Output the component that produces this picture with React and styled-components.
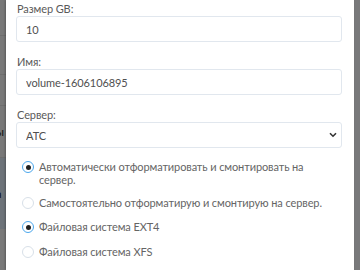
import React from "react";
import styled, { createGlobalStyle } from "styled-components";

const Global = createGlobalStyle`
  html, body { margin: 0; padding: 0; }
  body { width: 360px; height: 270px; overflow: hidden; font-family: Lato, "Noto Sans", "Liberation Sans", sans-serif; }
  #root { height: 270px; }
`;

const Screen = styled.div`
  position: relative;
  width: 360px;
  height: 270px;
  overflow: hidden;
  background: #f2f3f5;
`;

const PageBehind = styled.div`
  display: flex;
  flex-direction: column;
  width: 14px;
  height: 100%;
`;

const BehindRow = styled.div`
  height: ${(p) => p.$h}px;
  background: ${(p) => p.$bg};
  border-bottom: 1px solid ${(p) => p.$line || "transparent"};
  font-size: 11px;
  color: #222;
  line-height: ${(p) => p.$h}px;
  white-space: nowrap;
  overflow: hidden;
  text-indent: -4px;
`;

const Backdrop = styled.div`
  position: absolute;
  inset: 0;
  background: rgba(0, 0, 0, 0.5);
  display: flex;
  justify-content: center;
  align-items: flex-start;
`;

const Modal = styled.div`
  width: 348px;
  height: 270px;
  background: #ffffff;
  box-sizing: border-box;
  padding: 3px 12px 0 10px;
  box-shadow: -1px 0 2px rgba(0, 0, 0, 0.25);
`;

const Field = styled.div`
  display: flex;
  flex-direction: column;
  margin-bottom: ${(p) => (p.$last ? 0 : 14)}px;
`;

const Label = styled.label`
  display: block;
  font-size: 11px;
  letter-spacing: -0.1px;
  line-height: 12px;
  height: 12px;
  color: #5a5a5a;
  padding-left: 1px;
  margin-bottom: 1px;
  white-space: nowrap;
`;

const Input = styled.input`
  box-sizing: border-box;
  display: block;
  height: 26px;
  width: 100%;
  margin: 0;
  border: 1px solid #e1e7ee;
  border-radius: 3px;
  padding: 0 9px;
  font-family: inherit;
  font-size: 11px;
  letter-spacing: -0.1px;
  color: #505050;
  background: #fff;
  outline: none;
`;

const SelectWrap = styled.div`
  position: relative;
`;

const Select = styled.select`
  box-sizing: border-box;
  display: block;
  height: 26px;
  width: 100%;
  margin: 0;
  border: 1px solid #e1e7ee;
  border-radius: 3px;
  padding: 0 9px;
  font-family: inherit;
  font-size: 11px;
  color: #505050;
  background: #fff;
  appearance: none;
  outline: none;
`;

const Chevron = styled.svg`
  position: absolute;
  right: 5px;
  top: 10px;
  width: 8px;
  height: 6px;
  pointer-events: none;
`;

const Options = styled.div`
  display: flex;
  flex-direction: column;
  padding-top: 12px;
`;

const Option = styled.label`
  display: flex;
  align-items: flex-start;
  gap: 5px;
  padding-left: 6px;
  margin-bottom: ${(p) => p.$gap}px;
  font-size: 11px;
  letter-spacing: -0.1px;
  line-height: 13px;
  color: #656565;
`;

const RadioCircle = styled.span`
  flex: none;
  box-sizing: border-box;
  width: 12px;
  height: 12px;
  margin-top: 1px;
  border-radius: 50%;
  border: ${(p) => (p.$on ? "1.5px solid #4ba7ec" : "1px solid #d8e0e8")};
  display: flex;
  align-items: center;
  justify-content: center;
  &::after {
    content: "";
    width: 5px;
    height: 5px;
    border-radius: 50%;
    background: ${(p) => (p.$on ? "#222" : "transparent")};
  }
`;

const OptionText = styled.span`
  flex: 1;
`;

function Radio({ on, children, gap }) {
  return (
    <Option $gap={gap}>
      <RadioCircle $on={on} />
      <OptionText>{children}</OptionText>
    </Option>
  );
}

export default function App() {
  return (
    <>
      <Global />
      <Screen>
        <PageBehind>
          <BehindRow $h={36} $bg="#f0f0f0" $line="#dddddd" />
          <BehindRow $h={39} $bg="#f0f0f0" $line="#dddddd" />
          <BehindRow $h={30} $bg="#f0f0f0" $line="#dddddd" />
          <BehindRow $h={52} $bg="#f0f0f0" $line="#dddddd">ы</BehindRow>
          <BehindRow $h={72} $bg="#dbe6f2">а</BehindRow>
          <BehindRow $h={41} $bg="#f2f2f2" />
        </PageBehind>
        <Backdrop>
          <Modal>
            <Field>
              <Label>Размер GB:</Label>
              <Input defaultValue="10" />
            </Field>
            <Field>
              <Label>Имя:</Label>
              <Input defaultValue="volume-1606106895" />
            </Field>
            <Field $last>
              <Label>Сервер:</Label>
              <SelectWrap>
                <Select defaultValue="atc">
                  <option value="atc">ATC</option>
                </Select>
                <Chevron viewBox="0 0 8 6">
                  <path d="M1 1.2 L4 4.2 L7 1.2" fill="none" stroke="#333" strokeWidth="1.6" />
                </Chevron>
              </SelectWrap>
            </Field>
            <Options>
              <Radio on gap={10}>
                Автоматически отформатировать и смонтировать на сервер.
              </Radio>
              <Radio gap={11}>Самостоятельно отформатирую и смонтирую на сервер.</Radio>
              <Radio on gap={12}>Файловая система EXT4</Radio>
              <Radio gap={0}>Файловая система XFS</Radio>
            </Options>
          </Modal>
        </Backdrop>
      </Screen>
    </>
  );
}
